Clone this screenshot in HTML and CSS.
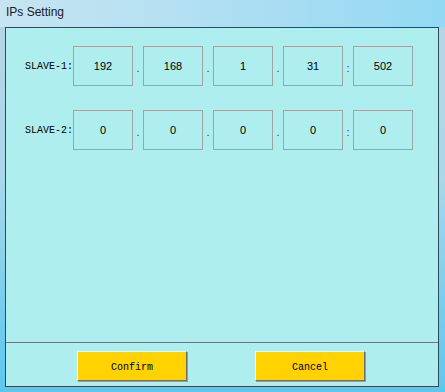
FILE: index.html
```html
<!DOCTYPE html>
<html>
<head>
<meta charset="UTF-8">
<title>IPs Setting</title>
<link rel="stylesheet" href="styles.css">
</head>
<body>
<div class="window">
    <div class="titlebar">IPs Setting</div>
    <div class="client">
        <div class="panel">
            <div class="slave_row">
                <span class="slave_label">SLAVE-1:</span>
                <div class="ip_box">192</div>
                <span class="sep">.</span>
                <div class="ip_box">168</div>
                <span class="sep">.</span>
                <div class="ip_box">1</div>
                <span class="sep">.</span>
                <div class="ip_box">31</div>
                <span class="sep">:</span>
                <div class="ip_box">502</div>
            </div>
            <div class="slave_row">
                <span class="slave_label">SLAVE-2:</span>
                <div class="ip_box">0</div>
                <span class="sep">.</span>
                <div class="ip_box">0</div>
                <span class="sep">.</span>
                <div class="ip_box">0</div>
                <span class="sep">.</span>
                <div class="ip_box">0</div>
                <span class="sep">:</span>
                <div class="ip_box">0</div>
            </div>
        </div>
        <div class="buttons">
            <button class="btn btn_confirm">Confirm</button>
            <button class="btn btn_cancel">Cancel</button>
        </div>
    </div>
</div>
</body>
</html>
```

FILE: styles.css
```css
html, body {
    margin: 0;
    padding: 0;
}
.window {
    width: 445px;
    height: 392px;
    box-sizing: border-box;
    padding: 0 6px 5px 5px;
    display: flex;
    flex-direction: column;
    background: linear-gradient(to bottom, #b9d3e2 0%, #a9d8ea 45%, #74cdee 80%, #5cc8ef 100%);
}
.titlebar {
    height: 27px;
    margin: 0 -6px 0 -5px;
    padding-left: 6px;
    line-height: 24px;
    font-family: "Liberation Sans", Arial, sans-serif;
    font-size: 12px;
    color: #1a1a1a;
    background: linear-gradient(to right, #c6e4f1 0%, #b4e0f2 40%, #93d9f3 100%);
}
.client {
    flex: 1;
    display: flex;
    flex-direction: column;
    border: 1px solid #2f4b58;
    background: #afeeee;
}
.panel {
    height: 315px;
    border-bottom: 1px solid #5f7b86;
    padding: 18px 0 0 19px;
    box-sizing: border-box;
}
.slave_row {
    display: flex;
    align-items: center;
    height: 40px;
    margin-bottom: 24px;
}
.slave_label {
    width: 48px;
    font-family: "Liberation Mono", "Courier New", monospace;
    font-size: 10px;
    color: #000;
}
.ip_box {
    width: 60px;
    height: 40px;
    box-sizing: border-box;
    border: 1px solid #9aa6a8;
    display: flex;
    align-items: center;
    justify-content: center;
    font-family: "Liberation Sans", Arial, sans-serif;
    font-size: 11px;
    color: #000;
}
.sep {
    width: 10px;
    text-align: center;
    font-family: "Liberation Sans", Arial, sans-serif;
    font-size: 11px;
    color: #333;
    padding-top: 4px;
}
.buttons {
    flex: 1;
    display: flex;
    align-items: flex-start;
    padding: 8px 0 0 71px;
    gap: 68px;
}
.btn {
    width: 110px;
    height: 30px;
    margin: 0;
    padding: 2px 0 0 0;
    background: #ffd200;
    border: 1px solid;
    border-color: #ffffff #6e6e6e #6e6e6e #ffffff;
    box-shadow: 1px 1px 0 #9a9a9a;
    font-family: "Liberation Mono", "Courier New", monospace;
    font-size: 10px;
    color: #000;
}
```
